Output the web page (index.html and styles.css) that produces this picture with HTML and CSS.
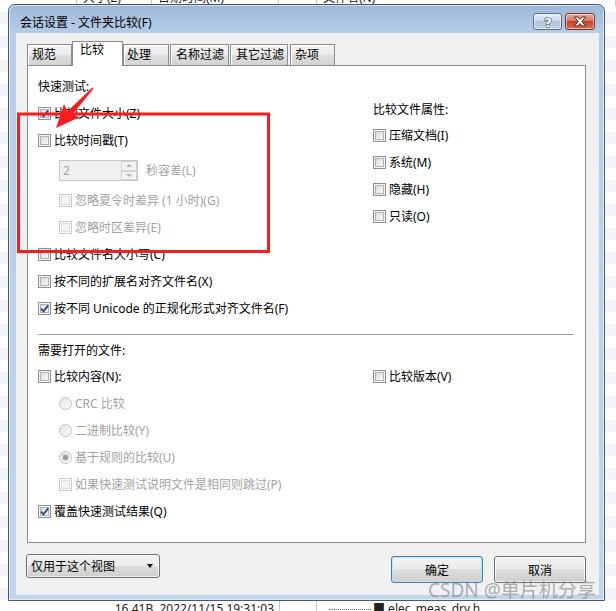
FILE: index.html
```html
<!DOCTYPE html>
<html lang="zh-CN">
<head>
    <meta charset="UTF-8">
    <title>会话设置 - 文件夹比较</title>
    <link rel="stylesheet" href="styles.css">
</head>
<body>
    <!-- the file list behind the dialog -->
    <div class="backdrop">
        <div class="bg-row top">
            <span class="bg-cell"></span>
            <span class="bg-cell">大小(Z)</span>
            <span class="bg-cell">日期时间(M)</span>
            <span class="bg-cell"></span>
            <span class="bg-cell">文件名(N)</span>
        </div>
        <div class="bg-row bottom">
            <span class="bg-cell size">16.41B  2022/11/15 19:31:03</span>
            <span class="bg-cell"></span>
            <span class="bg-cell file"><span class="tree"></span>■ elec_meas_drv.h</span>
        </div>
    </div>

    <div class="dialog">
        <div class="titlebar">
            <span class="title">会话设置 - 文件夹比较(F)</span>
            <div class="caption">
                <span class="cap-btn help">
                    <svg width="12" height="14" viewBox="0 0 12 14"><text x="6" y="12" text-anchor="middle" class="q">?</text></svg>
                </span>
                <span class="cap-btn close">
                    <svg width="14" height="11" viewBox="0 0 14 11"><path d="M1.5 1H5L7 3.4 9 1h3.5L8.9 5.5 12.5 10H9L7 7.6 5 10H1.5L5.1 5.5Z" fill="#fff" stroke="#5a2418" stroke-width="1" stroke-linejoin="round"/></svg>
                </span>
            </div>
        </div>

        <div class="client">
            <div class="tabs">
                <span class="tab t1">规范</span>
                <span class="tab t2 active">比较</span>
                <span class="tab t3">处理</span>
                <span class="tab t4">名称过滤</span>
                <span class="tab t5">其它过滤</span>
                <span class="tab t6">杂项</span>
            </div>

            <div class="panel">
                <div class="split">
                    <div class="col">
                        <div class="row label">快速测试:</div>
                        <div class="row"><span class="cb"><svg width="11" height="11" viewBox="0 0 11 11"><path d="M2 5.6 4.5 8.3 9.2 2.4" class="tick"/></svg></span>比较文件大小(Z)</div>
                        <div class="row"><span class="cb"></span>比较时间戳(T)</div>
                        <div class="row spin-row indent">
                            <div class="spin">
                                <span class="spin-val">2</span>
                                <span class="spin-btns"><span class="spin-up"></span><span class="spin-down"></span></span>
                            </div>
                            <span class="off spin-label">秒容差(L)</span>
                        </div>
                        <div class="row indent off"><span class="cb dis"></span>忽略夏令时差异 (1 小时)(G)</div>
                        <div class="row indent off"><span class="cb dis"></span>忽略时区差异(E)</div>
                        <div class="row"><span class="cb"></span>比较文件名大小写(C)</div>
                        <div class="row"><span class="cb"></span>按不同的扩展名对齐文件名(X)</div>
                        <div class="row"><span class="cb"><svg width="11" height="11" viewBox="0 0 11 11"><path d="M2 5.6 4.5 8.3 9.2 2.4" class="tick"/></svg></span>按不同 Unicode 的正规化形式对齐文件名(F)</div>
                    </div>
                    <div class="col attrs">
                        <div class="row label short">比较文件属性:</div>
                        <div class="row"><span class="cb"></span>压缩文档(I)</div>
                        <div class="row"><span class="cb"></span>系统(M)</div>
                        <div class="row"><span class="cb"></span>隐藏(H)</div>
                        <div class="row"><span class="cb"></span>只读(O)</div>
                    </div>
                </div>

                <div class="separator"></div>

                <div class="row label short open-label">需要打开的文件:</div>
                <div class="split">
                    <div class="row"><span class="cb"></span>比较内容(N):</div>
                    <div class="row"><span class="cb"></span>比较版本(V)</div>
                </div>
                <div class="row indent off"><span class="radio"></span>CRC 比较</div>
                <div class="row indent off"><span class="radio"></span>二进制比较(Y)</div>
                <div class="row indent off"><span class="radio on"></span>基于规则的比较(U)</div>
                <div class="row indent off"><span class="cb dis"></span>如果快速测试说明文件是相同则跳过(P)</div>
                <div class="row"><span class="cb"><svg width="11" height="11" viewBox="0 0 11 11"><path d="M2 5.6 4.5 8.3 9.2 2.4" class="tick"/></svg></span>覆盖快速测试结果(Q)</div>
            </div>

            <div class="footer">
                <div class="combo">仅用于这个视图<span class="combo-arrow"></span></div>
                <div class="buttons">
                    <button class="btn default">确定</button>
                    <button class="btn">取消</button>
                </div>
            </div>
        </div>
    </div>

    <!-- red markup drawn over the screenshot -->
    <svg class="annot" width="616" height="611" viewBox="0 0 616 611">
        <rect x="18.5" y="114" width="250" height="137.5" fill="none" stroke="#f81d1d" stroke-width="3"/>
        <polygon points="56,128 64,104 67.4,111.3 92.4,87.5 93.6,88.5 71.8,115.3 80,117" fill="#f81d1d"/>
    </svg>

    <div class="watermark">CSDN @单片机分享</div>
</body>
</html>
```

FILE: styles.css
```css
* {
    box-sizing: border-box;
}

body {
    margin: 0;
    width: 616px;
    height: 611px;
    position: relative;
    overflow: hidden;
    background: #fff;
    font-family: "Noto Sans", "Noto Sans CJK SC", sans-serif;
    font-size: 12px;
    color: #000;
}

/* ---------- backdrop ---------- */

.backdrop {
    height: 100%;
    display: flex;
    flex-direction: column;
    justify-content: space-between;
    background: repeating-linear-gradient(#fff 0 12px, #f3f5f8 12px 24px);
}

.bg-row {
    display: grid;
    height: 16px;
    line-height: 16px;
    white-space: pre;
    color: #222;
}

.bg-row.top {
    margin-top: -10px;
    grid-template-columns: 77px 75px 127px 38px 1fr;
}

.bg-row.bottom {
    margin-bottom: -6px;
    grid-template-columns: 280px 37px 1fr;
}

.bg-cell {
    padding-left: 6px;
    border-right: 1px solid #c8c8c8;
}

.bg-cell.size {
    text-align: right;
    padding-right: 5px;
}

.bg-cell.file {
    display: flex;
    align-items: center;
    padding-left: 12px;
    border-right: none;
}

.tree {
    width: 42px;
    margin-right: 2px;
    border-top: 1px dotted #777;
}

/* ---------- dialog frame ---------- */

.dialog {
    position: absolute;
    left: 8px;
    top: 4px;
    width: 597px;
    height: 597px;
    display: flex;
    flex-direction: column;
    padding: 0 5px 5px 7px;
    border: 1px solid #4b5868;
    border-radius: 7px 7px 0 0;
    background: linear-gradient(#9db8d7, #b6cee9 30px, #bed5ed);
    box-shadow: inset 1px 1px 0 rgba(255, 255, 255, .55), inset -1px -1px 0 rgba(255, 255, 255, .55);
}

.titlebar {
    height: 28px;
    flex: none;
    display: flex;
    justify-content: space-between;
    align-items: flex-start;
}

.title {
    margin: 10px 0 0 4px;
    line-height: 16px;
}

.caption {
    display: flex;
    gap: 3px;
    margin: 8px 4px 0 0;
}

.cap-btn {
    width: 29px;
    height: 17px;
    display: flex;
    align-items: center;
    justify-content: center;
    border: 1px solid #5c708b;
    border-radius: 3px;
    background: linear-gradient(#e6eef8, #c9d8eb 50%, #b0c4de 50%, #c0d3ea);
    box-shadow: inset 0 0 0 1px rgba(255, 255, 255, .5);
}

.cap-btn.close {
    width: 30px;
    border-color: #7a3428;
    background: linear-gradient(#eaa89a, #d9735f 50%, #c2432a 50%, #d56c52);
}

.q {
    font-family: "DejaVu Sans", sans-serif;
    font-size: 13px;
    font-weight: bold;
    fill: #fff;
    stroke: #3d4d63;
    stroke-width: 1.2px;
    paint-order: stroke;
}

.client {
    flex: 1;
    display: flex;
    flex-direction: column;
    padding: 8px 13px 0 11px;
    background: #f0f0f0;
}

/* ---------- tabs ---------- */

.tabs {
    display: flex;
    align-items: flex-start;
    height: 25px;
    margin-bottom: -1px;
    position: relative;
    z-index: 1;
}

.tab {
    height: 21px;
    margin-top: 3px;
    padding: 2px 0 0 5px;
    line-height: 16px;
    border: 1px solid #898c95;
    border-bottom: none;
    background: linear-gradient(#f3f3f3, #ebebeb 50%, #dedede 50%, #d3d3d3);
    box-shadow: inset 1px 1px 0 #fff;
}

.tab.active {
    height: 25px;
    margin-top: 0;
    padding: 0 0 0 7px;
    background: #fff;
    box-shadow: none;
}

.t1 { width: 45px; padding-left: 4px; }
.t2 { width: 51px; }
.t3 { width: 46px; padding-left: 3px; }
.t4 { width: 59px; margin-left: 1px; }
.t5 { width: 58px; margin-left: 1px; }
.t6 { width: 45px; margin-left: 2px; padding-left: 4px; }

/* ---------- tab page ---------- */

.panel {
    height: 478px;
    flex: none;
    padding: 8px 11px 0 10px;
    background: #fff;
    border: 1px solid #898c95;
}

.split {
    display: grid;
    grid-template-columns: 335px 1fr;
}

.attrs {
    padding-top: 24px;
}

.row {
    display: flex;
    align-items: center;
    height: 27px;
    line-height: 16px;
    white-space: nowrap;
}

.row.label {
    height: 26px;
}

.row.short {
    height: 24px;
}

.indent {
    padding-left: 21px;
}

.off {
    color: #a2a2a2;
}

.separator {
    margin-top: 12px;
    height: 1px;
    background: #a0a0a0;
}

.open-label {
    margin-top: 4px;
}

/* ---------- checkboxes & radios ---------- */

.cb {
    flex: none;
    width: 13px;
    height: 13px;
    margin-right: 3px;
    display: flex;
    align-items: center;
    justify-content: center;
    border: 1px solid #8e8f8f;
    background: linear-gradient(135deg, #cdd1d6, #f5f5f5 75%);
    box-shadow: inset 0 0 0 1px #f4f4f4, inset 0 0 0 2px #aeb3b9;
}

.cb.dis {
    border-color: #c8c8c8;
    background: #f4f4f4;
    box-shadow: inset 0 0 0 1px #fff, inset 0 0 0 2px #dedede;
}

.tick {
    fill: none;
    stroke: #34478a;
    stroke-width: 1.9;
}

.radio {
    flex: none;
    width: 13px;
    height: 13px;
    margin-right: 3px;
    display: flex;
    align-items: center;
    justify-content: center;
    border: 1px solid #c4c4c4;
    border-radius: 50%;
    background: linear-gradient(135deg, #e3e3e3, #fbfbfb);
}

.radio.on::after {
    content: "";
    width: 5px;
    height: 5px;
    border-radius: 50%;
    background: #9b9b9b;
    box-shadow: 0 0 0 1px #cfcfcf;
}

/* ---------- spinner ---------- */

.row.spin-row {
    height: 33px;
}

.spin {
    width: 79px;
    height: 21px;
    display: flex;
    justify-content: space-between;
    border: 1px solid #c6c6c6;
    background: #f0f0f0;
}

.spin-val {
    padding-left: 3px;
    line-height: 19px;
    color: #a2a2a2;
}

.spin-btns {
    width: 16px;
    display: flex;
    flex-direction: column;
}

.spin-up,
.spin-down {
    flex: 1;
    display: flex;
    align-items: center;
    justify-content: center;
    border: 1px solid #d4d4d4;
    background: #f2f2f2;
}

.spin-up::after {
    content: "";
    border: 3px solid transparent;
    border-top: none;
    border-bottom: 3px solid #b4b4b4;
}

.spin-down::after {
    content: "";
    border: 3px solid transparent;
    border-bottom: none;
    border-top: 3px solid #b4b4b4;
}

.spin-label {
    margin-left: 8px;
}

/* ---------- footer ---------- */

.footer {
    display: flex;
    justify-content: space-between;
    align-items: flex-start;
    margin-top: 11px;
}

.combo {
    width: 134px;
    height: 24px;
    margin-left: -1px;
    padding-left: 4px;
    display: flex;
    align-items: center;
    justify-content: space-between;
    border: 1px solid #707070;
    border-radius: 3px;
    background: linear-gradient(#f2f2f2, #ebebeb 50%, #dddddd 50%, #cfcfcf);
    box-shadow: inset 0 0 0 1px rgba(255, 255, 255, .7);
}

.combo-arrow {
    margin-right: 6px;
    border: 3.5px solid transparent;
    border-bottom: none;
    border-top: 4px solid #000;
}

.buttons {
    display: flex;
    gap: 11px;
    margin-top: 2px;
}

.btn {
    width: 92px;
    height: 27px;
    padding: 0;
    font: inherit;
    color: #000;
    border: 1px solid #707070;
    border-radius: 3px;
    background: linear-gradient(#f2f2f2, #ebebeb 50%, #dddddd 50%, #cfcfcf);
    box-shadow: inset 0 0 0 1px rgba(255, 255, 255, .7);
}

.btn.default {
    border-color: #3c7fb1;
    box-shadow: inset 0 0 0 1px #c3e3f5;
}

/* ---------- overlays ---------- */

.annot {
    position: absolute;
    left: 0;
    top: 0;
    pointer-events: none;
}

.watermark {
    position: absolute;
    left: 428px;
    top: 578px;
    font-family: "Noto Sans", "Noto Sans CJK SC", sans-serif;
    font-size: 19px;
    line-height: 24px;
    color: rgba(125, 125, 125, .6);
    white-space: nowrap;
}
```
